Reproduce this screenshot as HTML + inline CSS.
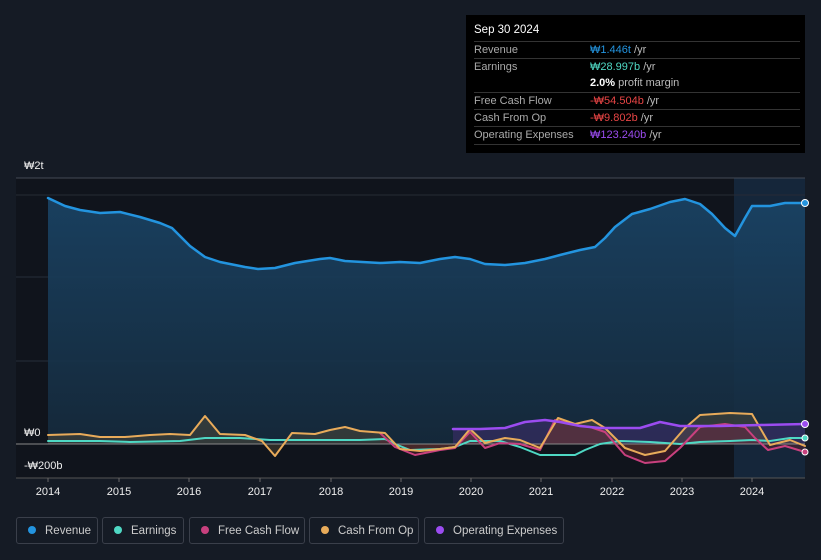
<!DOCTYPE html>
<html><head><meta charset="utf-8"><style>
body{margin:0;width:821px;height:560px;background:#151b25;font-family:"Liberation Sans",sans-serif;overflow:hidden;position:relative}
.tt{position:absolute;left:466px;top:15px;width:339px;height:138px;background:#000;color:#fff;font-size:11px}
.tt .h{position:absolute;left:8px;top:9px;font-size:11.5px}
.row{position:absolute;left:8px;width:326px;border-top:1px solid #333;height:17px;line-height:17px}
.row span.l{color:#aaa;position:absolute;left:0}
.row span.v{position:absolute;left:116px;color:#bbb}
.leg{position:absolute;top:517px;height:27px;border:1px solid #3a3f4a;border-radius:3px;color:#ccc;font-size:11.5px;line-height:27px;box-sizing:border-box}
.leg i{display:inline-block;width:8px;height:8px;border-radius:50%;margin:0 9px 0 11px;vertical-align:0px}
.ax{position:absolute;color:#eee;font-size:11px}
path{stroke-linejoin:round;stroke-linecap:round}
</style></head><body>
<div class="tt">
<div class="h">Sep 30 2024</div>
<div class="row" style="top:26px"><span class="l">Revenue</span><span class="v"><b style="color:#2394df;font-weight:normal">₩1.446t</b> /yr</span></div>
<div class="row" style="top:43px"><span class="l">Earnings</span><span class="v"><b style="color:#4fd8c4;font-weight:normal">₩28.997b</b> /yr</span></div>
<div class="row" style="top:60px;border-top:none"><span class="v"><b style="color:#fff">2.0%</b> profit margin</span></div>
<div class="row" style="top:77px"><span class="l">Free Cash Flow</span><span class="v"><b style="color:#e84545;font-weight:normal">-₩54.504b</b> /yr</span></div>
<div class="row" style="top:94px"><span class="l">Cash From Op</span><span class="v"><b style="color:#e84545;font-weight:normal">-₩9.802b</b> /yr</span></div>
<div class="row" style="top:111px;border-bottom:1px solid #333"><span class="l">Operating Expenses</span><span class="v"><b style="color:#9b4cf0;font-weight:normal">₩123.240b</b> /yr</span></div>
</div>
<svg width="821" height="560" style="position:absolute;left:0;top:0">
<defs><linearGradient id="g" x1="0" y1="0" x2="0" y2="1"><stop offset="0" stop-color="#1a4466"/><stop offset="1" stop-color="#152a3c"/></linearGradient></defs>
<rect x="16" y="178" width="718" height="300" fill="#10141c"/>
<rect x="734" y="178" width="71" height="300" fill="#15263a"/>
<line x1="16" y1="178" x2="805" y2="178" stroke="#444a55"/>
<line x1="16" y1="195" x2="805" y2="195" stroke="#262b35"/>
<line x1="16" y1="277" x2="805" y2="277" stroke="#262e3a"/>
<line x1="16" y1="361" x2="805" y2="361" stroke="#262e3a"/>
<path d="M48,198 L65,206 L80,210 L100,213 L120,212 L140,217 L160,223 L172,228 L180,236 L190,246 L205,257 L220,262 L245,267 L258,269 L275,268 L295,263 L320,259 L330,258 L345,261 L380,263 L400,262 L420,263 L440,259 L455,257 L470,259 L485,264 L505,265 L525,263 L545,259 L560,255 L580,250 L595,247 L605,238 L615,227 L632,214 L650,209 L670,202 L685,199 L700,204 L712,214 L725,228 L735,236 L745,218 L752,206 L770,206 L785,203 L805,203 L805,444 L48,444Z" fill="url(#g)" opacity="0.9"/>
<path d="M48,198 L65,206 L80,210 L100,213 L120,212 L140,217 L160,223 L172,228 L180,236 L190,246 L205,257 L220,262 L245,267 L258,269 L275,268 L295,263 L320,259 L330,258 L345,261 L380,263 L400,262 L420,263 L440,259 L455,257 L470,259 L485,264 L505,265 L525,263 L545,259 L560,255 L580,250 L595,247 L605,238 L615,227 L632,214 L650,209 L670,202 L685,199 L700,204 L712,214 L725,228 L735,236 L745,218 L752,206 L770,206 L785,203 L805,203" fill="none" stroke="#2394df" stroke-width="2.5"/>
<path d="M453,429 L480,429 L505,428 L525,422 L545,420 L560,422 L580,426 L600,428 L640,428 L660,422 L680,426 L720,426 L760,425 L805,424 L805,444 L453,444Z" fill="#4a2f7a" opacity="0.45"/>
<path d="M48,435 L80,434 L100,437 L125,437 L150,435 L170,434 L190,435 L205,416 L220,434 L245,435 L262,441 L275,456 L292,433 L315,434 L330,430 L345,427 L360,431 L385,433 L400,449 L420,451 L440,449 L455,447 L470,429 L485,443 L505,438 L520,440 L540,448 L558,418 L575,424 L592,420 L605,428 L625,448 L645,455 L665,451 L685,428 L700,415 L730,413 L752,414 L770,445 L790,440 L805,446 L805,444 L48,444Z" fill="#6a5a3a" opacity="0.35"/>
<path d="M380,433 L395,447 L415,455 L440,450 L455,448 L470,432 L485,448 L500,443 L520,444 L540,450 L555,420 L575,425 L590,427 L605,432 L625,455 L645,463 L665,461 L680,448 L700,427 L725,424 L745,427 L755,438 L768,450 L785,446 L805,452 L805,444 L380,444Z" fill="#6a2030" opacity="0.4"/>
<line x1="16" y1="444" x2="805" y2="444" stroke="#888" stroke-width="1"/>
<line x1="16" y1="478" x2="805" y2="478" stroke="#555"/>
<path d="M48,441 L100,441 L130,442 L180,441 L205,438 L240,438 L270,440 L320,440 L360,440 L385,439 L395,444 L410,450 L440,449 L455,447 L470,441 L500,441 L520,447 L540,455 L575,455 L585,450 L600,444 L620,441 L650,442 L680,444 L700,442 L730,441 L752,440 L770,441 L790,438 L805,438" fill="none" stroke="#4fd8c4" stroke-width="2"/>
<path d="M380,433 L395,447 L415,455 L440,450 L455,448 L470,432 L485,448 L500,443 L520,444 L540,450 L555,420 L575,425 L590,427 L605,432 L625,455 L645,463 L665,461 L680,448 L700,427 L725,424 L745,427 L755,438 L768,450 L785,446 L805,452" fill="none" stroke="#c8407e" stroke-width="2"/>
<path d="M48,435 L80,434 L100,437 L125,437 L150,435 L170,434 L190,435 L205,416 L220,434 L245,435 L262,441 L275,456 L292,433 L315,434 L330,430 L345,427 L360,431 L385,433 L400,449 L420,451 L440,449 L455,447 L470,429 L485,443 L505,438 L520,440 L540,448 L558,418 L575,424 L592,420 L605,428 L625,448 L645,455 L665,451 L685,428 L700,415 L730,413 L752,414 L770,445 L790,440 L805,446" fill="none" stroke="#e8ab5a" stroke-width="2"/>
<path d="M453,429 L480,429 L505,428 L525,422 L545,420 L560,422 L580,426 L600,428 L640,428 L660,422 L680,426 L720,426 L760,425 L805,424" fill="none" stroke="#9b4cf0" stroke-width="2.5"/>
<circle cx="805" cy="203" r="3.5" fill="#2394df" stroke="#fff"/>
<circle cx="805" cy="424" r="3.5" fill="#9b4cf0" stroke="#fff"/>
<circle cx="805" cy="438" r="3" fill="#4fd8c4" stroke="#fff"/>
<circle cx="805" cy="452" r="3" fill="#c8407e" stroke="#fff"/>
<g stroke="#666"><line x1="48" y1="478" x2="48" y2="482"/><line x1="119" y1="478" x2="119" y2="482"/><line x1="189" y1="478" x2="189" y2="482"/><line x1="260" y1="478" x2="260" y2="482"/><line x1="331" y1="478" x2="331" y2="482"/><line x1="401" y1="478" x2="401" y2="482"/><line x1="471" y1="478" x2="471" y2="482"/><line x1="541" y1="478" x2="541" y2="482"/><line x1="612" y1="478" x2="612" y2="482"/><line x1="682" y1="478" x2="682" y2="482"/><line x1="752" y1="478" x2="752" y2="482"/></g>
<g fill="#eee" font-size="11" text-anchor="middle" font-family="Liberation Sans"><text x="48" y="495">2014</text><text x="119" y="495">2015</text><text x="189" y="495">2016</text><text x="260" y="495">2017</text><text x="331" y="495">2018</text><text x="401" y="495">2019</text><text x="471" y="495">2020</text><text x="541" y="495">2021</text><text x="612" y="495">2022</text><text x="682" y="495">2023</text><text x="752" y="495">2024</text></g>
</svg>
<div class="ax" style="left:24px;top:160px">₩2t</div>
<div class="ax" style="left:24px;top:427px">₩0</div>
<div class="ax" style="left:24px;top:460px">-₩200b</div>
<div class="leg" style="left:16px;width:82px"><i style="background:#2394df"></i>Revenue</div>
<div class="leg" style="left:102px;width:82px"><i style="background:#4fd8c4"></i>Earnings</div>
<div class="leg" style="left:189px;width:116px"><i style="background:#c8407e"></i>Free Cash Flow</div>
<div class="leg" style="left:309px;width:110px"><i style="background:#e8ab5a"></i>Cash From Op</div>
<div class="leg" style="left:424px;width:140px"><i style="background:#9b4cf0"></i>Operating Expenses</div>
</body></html>
